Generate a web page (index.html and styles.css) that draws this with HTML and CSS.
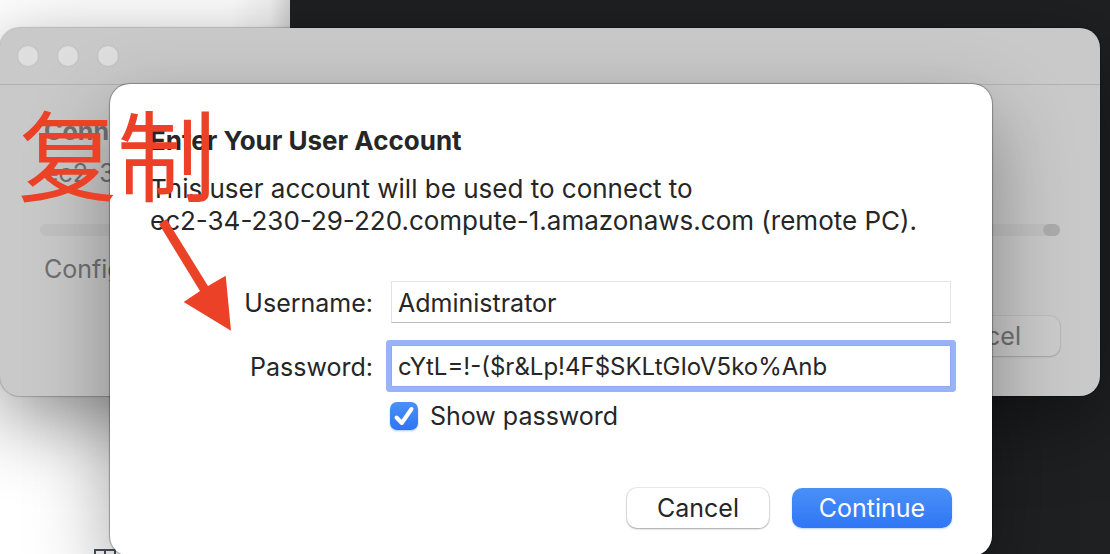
FILE: index.html
```html
<!DOCTYPE html>
<html lang="en">
<head>
<meta charset="utf-8">
<title>Enter Your User Account</title>
<link rel="stylesheet" href="styles.css">
</head>
<body>
<main class="desktop">
  <div class="page-behind">
    <svg class="grid-glyph" width="22" height="5" viewBox="0 0 22 5" fill="none" stroke="#4a505c" stroke-width="2" aria-hidden="true"><path d="M1 5V1H21V5M11 1V5"/></svg>
  </div>

  <section class="window" aria-label="Connection">
    <header class="titlebar">
      <button class="light" type="button" aria-label="Close"></button>
      <button class="light" type="button" aria-label="Minimize"></button>
      <button class="light" type="button" aria-label="Zoom"></button>
    </header>
    <div class="window-body">
      <h2 class="window-title">Conn</h2>
      <p class="window-host">ec2-3</p>
      <div class="track" role="progressbar" aria-label="Connection progress"><span class="track-bead"></span></div>
      <p class="window-status">Config</p>
      <div class="window-actions"><button class="btn btn-dim" type="button">Cancel</button></div>
    </div>
  </section>

  <form class="dialog" role="dialog" aria-labelledby="dialog-title">
    <h1 class="dialog-title" id="dialog-title">Enter Your User Account</h1>
    <p class="dialog-text">This user account will be used to connect to<br>ec2-34-230-29-220.compute-1.amazonaws.com (remote PC).</p>
    <div class="fields">
      <label class="label" for="username">Username:</label>
      <input class="field" id="username" type="text" value="Administrator">
      <label class="label" for="password">Password:</label>
      <input class="field field-active" id="password" type="text" value="cYtL=!-($r&amp;Lp!4F$SKLtGIoV5ko%Anb">
    </div>
    <div class="show-row">
      <span class="check">
        <input class="check-input" id="show" type="checkbox" checked>
        <svg class="check-mark" viewBox="0 0 28 28" fill="none" stroke="#fff" stroke-width="4" stroke-linecap="round" stroke-linejoin="round" aria-hidden="true"><path d="M6.500 15.500L11.800 21L21.500 7"/></svg>
      </span>
      <label for="show">Show password</label>
    </div>
    <div class="actions">
      <button class="btn" type="button">Cancel</button>
      <button class="btn btn-primary" type="submit">Continue</button>
    </div>
  </form>

  <p class="note" lang="zh">复制</p>
  <svg class="arrow" width="74" height="114" viewBox="0 0 74 114" fill="#eb4126" aria-hidden="true"><path d="M1 6L8.500 1L50 68L67.700 57.700L73 112.700L25.700 84L42 73Z"/></svg>
</main>
</body>
</html>
```

FILE: styles.css
```css
* {
  box-sizing: border-box;
}

body {
  margin: 0;
  overflow: hidden;
  background: #1f2022;
  color: #262626;
  font: 25px/32px Inter, "Noto Sans CJK SC", sans-serif;
}

h1, h2, p {
  margin: 0;
  font-size: inherit;
}

button, input {
  font: inherit;
  color: inherit;
}

.desktop {
  position: relative;
  display: flex;
  height: 100vh;
  overflow: hidden;
}

.page-behind {
  display: flex;
  align-items: flex-end;
  width: 290px;
  padding-left: 94px;
  background: linear-gradient(to left, #d4d4d4, #f2f2f2 20px, #fff 60px);
}

.grid-glyph {
  display: block;
}

/* Connection window */
.window {
  position: absolute;
  top: 28px;
  left: 0;
  right: 10px;
  border-radius: 20px;
  background: #c9c9c9;
  color: #707070;
  box-shadow: 0 0 1px 1px rgba(0, 0, 0, .2), 0 24px 80px rgba(0, 0, 0, .45);
}

.titlebar {
  display: flex;
  align-items: center;
  gap: 18px;
  height: 57px;
  padding: 0 17px;
  border-bottom: 1px solid #b2b2b2;
}

.light {
  width: 22px;
  height: 22px;
  padding: 0;
  border: 1px solid #c0c0c0;
  border-radius: 50%;
  background: #dedede;
}

.window-body {
  padding: 30px 40px 40px;
}

.window-title, .window-host, .window-status {
  padding-left: 4px;
}

.window-host {
  margin-top: 10px;
}

.track {
  display: flex;
  justify-content: flex-end;
  height: 12px;
  margin: 35px 0 17px;
  border-radius: 6px;
  background: #c1c1c1;
}

.track-bead {
  width: 17px;
  border-radius: 6px;
  background: #acacac;
}

.window-actions {
  display: flex;
  justify-content: flex-end;
  margin-top: 31px;
}

/* Account sheet */
.dialog {
  position: absolute;
  top: 84px;
  left: 110px;
  right: 118px;
  padding: 41px 40px 28px;
  border-radius: 20px;
  background: #fff;
  box-shadow: 0 0 1px 1px rgba(0, 0, 0, .3), 0 32px 80px rgba(0, 0, 0, .35);
}

.dialog-title, .dialog-text {
  font-size: 26px;
}

.dialog-text {
  margin-top: 16px;
}

.fields {
  display: grid;
  grid-template-columns: 223px 1fr;
  gap: 22px 18px;
  align-items: center;
  margin: 44px 1px 0 0;
}

.label {
  padding-top: 2px;
  text-align: right;
}

.field {
  width: 100%;
  height: 42px;
  padding: 2px 6px 0;
  border: 1px solid #e3e3e3;
  border-bottom-color: #bbb;
  border-radius: 0;
  outline: 0;
  background: #fff;
}

.field-active {
  padding-top: 0;
  border-color: #8fa9ee;
  border-radius: 1px;
  box-shadow: 0 0 0 5px #98b3f8;
  font-size: 24px;
}

.show-row {
  display: flex;
  align-items: center;
  gap: 12px;
  margin: 13px 0 0 240px;
}

.check {
  display: grid;
  width: 28px;
  height: 28px;
}

.check-input, .check-mark {
  grid-area: 1 / 1;
  width: 28px;
  height: 28px;
  margin: 0;
}

.check-input {
  appearance: none;
  border-radius: 7px;
  background: linear-gradient(#4a90f8, #2f74f5);
  box-shadow: 0 1px 2px rgba(47, 116, 245, .4);
}

.check-mark {
  pointer-events: none;
}

.actions {
  display: flex;
  justify-content: flex-end;
  gap: 23px;
  margin-top: 56px;
}

.btn {
  min-width: 142px;
  height: 40px;
  padding: 0 20px;
  border: 0;
  border-radius: 10px;
  background: #fff;
  line-height: 38px;
  box-shadow: 0 0 0 1px rgba(0, 0, 0, .08), 0 1px 2px rgba(0, 0, 0, .3);
}

.btn-primary {
  min-width: 160px;
  background: linear-gradient(#4a90f8, #3076f6);
  color: #fff;
  box-shadow: 0 1px 2px rgba(47, 116, 245, .3);
}

.btn-dim {
  min-width: 160px;
  background: #cbcbcb;
  box-shadow: 0 0 0 1px rgba(0, 0, 0, .05), 0 1px 2px rgba(0, 0, 0, .15);
}

/* Hand-drawn annotation over the sheet */
.note {
  position: absolute;
  top: 102px;
  left: 18px;
  color: #eb4126;
  font: 99px/99px "Noto Sans CJK SC", sans-serif;
}

.arrow {
  position: absolute;
  top: 218px;
  left: 158px;
}
```
